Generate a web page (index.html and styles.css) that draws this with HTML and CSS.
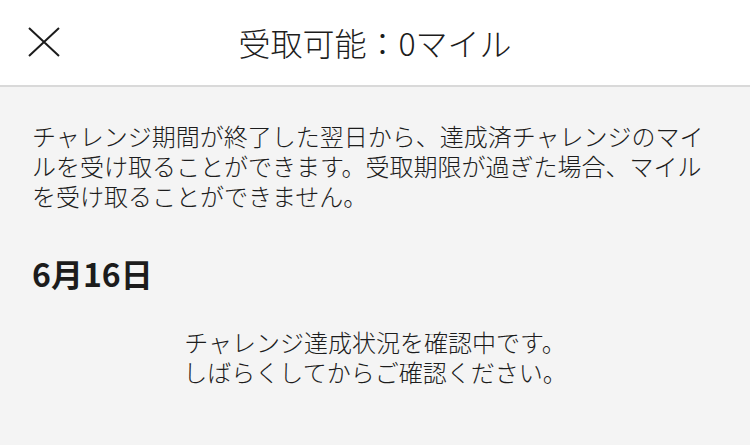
FILE: index.html
```html
<!DOCTYPE html>
<html lang="ja">
<head>
<meta charset="utf-8">
<link rel="stylesheet" href="styles.css">
</head>
<body>
<header class="header">
  <div class="header-left">
    <button class="close" aria-label="閉じる">
      <svg width="32" height="30" viewBox="0 0 32 30"><path d="M1 1 L31 29 M31 1 L1 29" stroke="#1c1c1c" stroke-width="2" fill="none"/></svg>
    </button>
  </div>
  <h1 class="title">受取可能：0マイル</h1>
  <div class="header-right"></div>
</header>
<main class="content">
  <p class="notice">チャレンジ期間が終了した翌日から、達成済チャレンジのマイルを受け取ることができます。受取期限が過ぎた場合、マイルを受け取ることができません。</p>
  <h2 class="date">6月16日</h2>
  <div class="status">
    <p class="status-line">チャレンジ達成状況を確認中です。</p>
    <p class="status-line">しばらくしてからご確認ください。</p>
  </div>
</main>
</body>
</html>
```
FILE: styles.css
```css
* { box-sizing: border-box; }
html, body {
  margin: 0;
  padding: 0;
  width: 750px;
  height: 445px;
  overflow: hidden;
  background: #f4f4f4;
  font-family: "Noto Sans CJK JP", "Noto Sans", sans-serif;
  color: #1c1c1c;
}
.header {
  height: 87px;
  background: #ffffff;
  border-bottom: 2px solid #d9d9d9;
  display: grid;
  grid-template-columns: 1fr auto 1fr;
  align-items: center;
}
.header-left {
  padding-left: 28px;
  display: flex;
  align-items: center;
}
.close {
  border: 0;
  background: none;
  padding: 0;
  margin: 0;
  display: block;
  width: 32px;
  height: 30px;
  margin-top: -1px;
}
.close svg { display: block; }
.title {
  margin: 0;
  font-size: 32px;
  font-weight: 300;
  line-height: 40px;
  color: #1c1c1c;
  margin-top: -2px;
}
.content {
  padding: 34px 32px 0 32px;
}
.notice {
  margin: 0;
  font-size: 24px;
  font-weight: 300;
  line-height: 30px;
}
.date {
  margin: 46px 0 0 0;
  font-size: 32px;
  font-weight: 700;
  line-height: 32px;
}
.status {
  margin: 38px -32px 0 -32px;
  display: flex;
  flex-direction: column;
  align-items: center;
}
.status-line {
  margin: 0;
  font-size: 24px;
  font-weight: 300;
  line-height: 30px;
  text-align: center;
}
```
